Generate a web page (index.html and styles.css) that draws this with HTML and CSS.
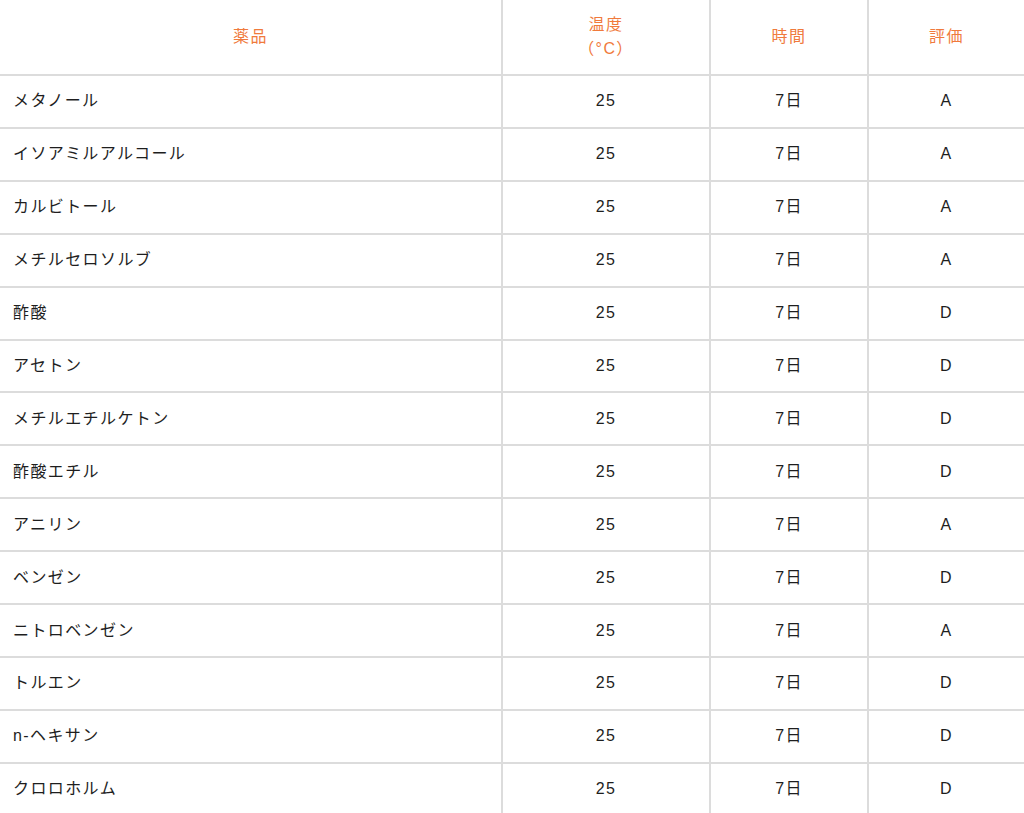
FILE: index.html
```html
<!DOCTYPE html>
<html lang="ja">
<head>
<meta charset="utf-8">
<link rel="stylesheet" href="styles.css">
</head>
<body>
<table class="chem-table">
  <colgroup>
    <col class="c-name">
    <col class="c-temp">
    <col class="c-time">
    <col class="c-eval">
  </colgroup>
  <thead>
    <tr>
      <th>薬品</th>
      <th>温度<br>（°C）</th>
      <th>時間</th>
      <th>評価</th>
    </tr>
  </thead>
  <tbody>
    <tr><td>メタノール</td><td>25</td><td>7日</td><td>A</td></tr>
    <tr><td>イソアミルアルコール</td><td>25</td><td>7日</td><td>A</td></tr>
    <tr><td>カルビトール</td><td>25</td><td>7日</td><td>A</td></tr>
    <tr><td>メチルセロソルブ</td><td>25</td><td>7日</td><td>A</td></tr>
    <tr><td>酢酸</td><td>25</td><td>7日</td><td>D</td></tr>
    <tr><td>アセトン</td><td>25</td><td>7日</td><td>D</td></tr>
    <tr><td>メチルエチルケトン</td><td>25</td><td>7日</td><td>D</td></tr>
    <tr><td>酢酸エチル</td><td>25</td><td>7日</td><td>D</td></tr>
    <tr><td>アニリン</td><td>25</td><td>7日</td><td>A</td></tr>
    <tr><td>ベンゼン</td><td>25</td><td>7日</td><td>D</td></tr>
    <tr><td>ニトロベンゼン</td><td>25</td><td>7日</td><td>A</td></tr>
    <tr><td>トルエン</td><td>25</td><td>7日</td><td>D</td></tr>
    <tr><td>n-ヘキサン</td><td>25</td><td>7日</td><td>D</td></tr>
    <tr><td>クロロホルム</td><td>25</td><td>7日</td><td>D</td></tr>
  </tbody>
</table>
</body>
</html>
```
FILE: styles.css
```css
html, body {
  margin: 0;
  padding: 0;
  background: #fff;
}
body {
  font-family: "Liberation Sans", "Noto Sans CJK JP", sans-serif;
  font-size: 16px;
  color: #1e1e1e;
}
.chem-table {
  width: 1024px;
  border-collapse: collapse;
  table-layout: fixed;
}
.c-name { width: 502px; }
.c-temp { width: 208px; }
.c-time { width: 158px; }
.c-eval { width: 156px; }

.chem-table th,
.chem-table td {
  border-bottom: 2px solid #dcdcdc;
  border-left: 2px solid #dcdcdc;
  padding: 0;
  text-align: center;
  vertical-align: middle;
  letter-spacing: 1.4px;
}
.chem-table th:first-child,
.chem-table td:first-child {
  border-left: none;
}
.chem-table th {
  height: 74px;
  font-weight: normal;
  color: #f07a3c;
  line-height: 24px;
}
.chem-table td {
  height: 50.92px;
  line-height: 20px;
}
.chem-table td:first-child {
  text-align: left;
  padding-left: 13px;
}
```
